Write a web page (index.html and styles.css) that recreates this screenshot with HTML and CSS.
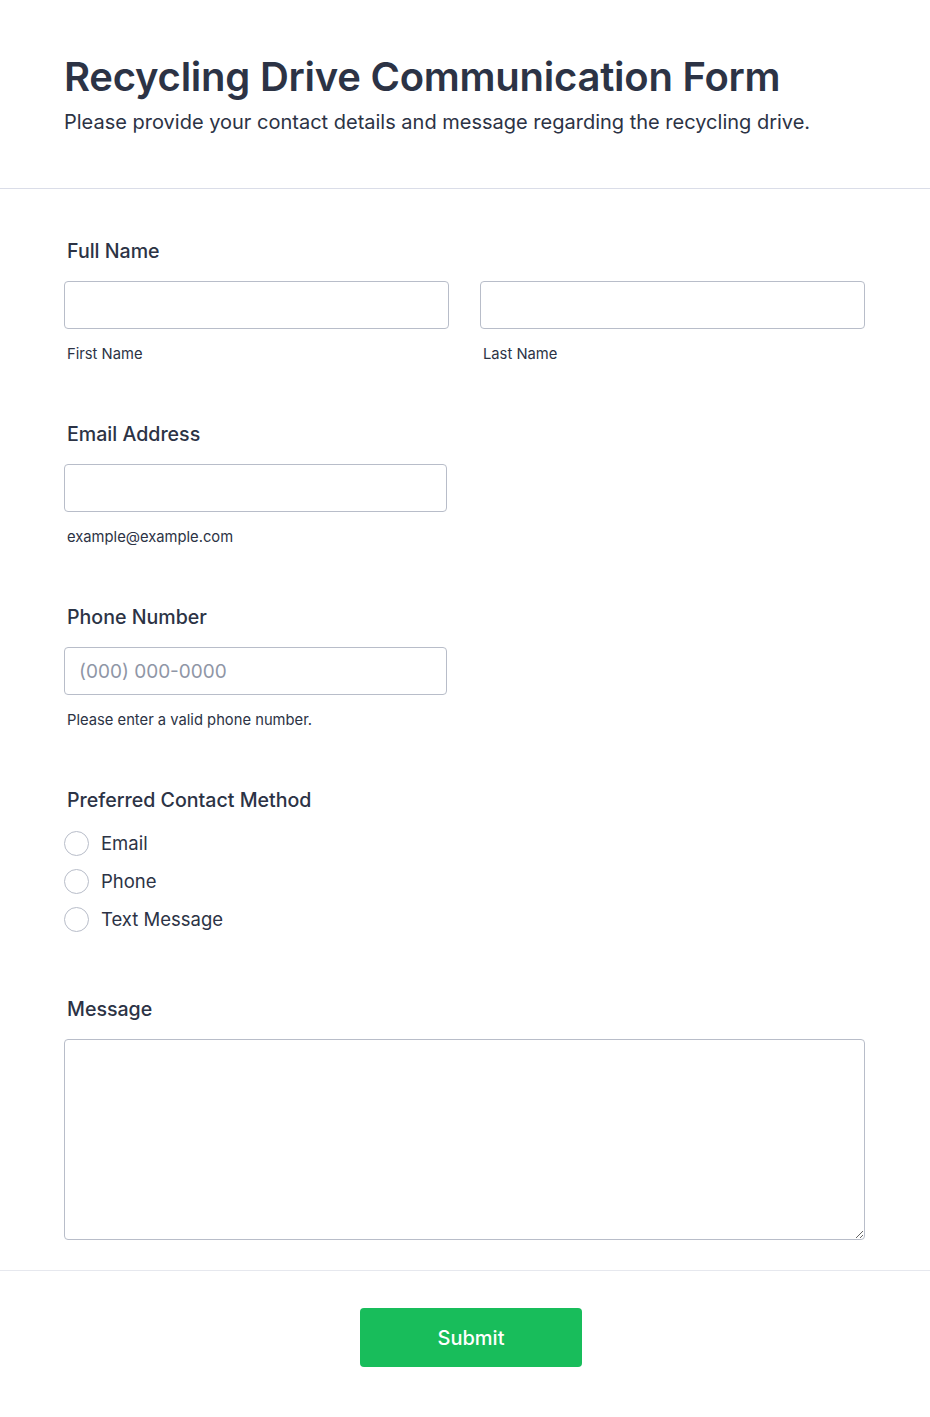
FILE: index.html
```html
<!DOCTYPE html>
<html lang="en">
<head>
<meta charset="utf-8">
<title>Recycling Drive Communication Form</title>
<link rel="stylesheet" href="styles.css">
</head>
<body>
<header class="form-header">
  <h1 class="form-title">Recycling Drive Communication Form</h1>
  <p class="form-subtitle">Please provide your contact details and message regarding the recycling drive.</p>
</header>
<form class="form-body">
  <div class="field">
    <label class="field-label">Full Name</label>
    <div class="name-grid">
      <div class="sub">
        <input class="text-input" type="text">
        <span class="sub-label">First Name</span>
      </div>
      <div class="sub">
        <input class="text-input" type="text">
        <span class="sub-label">Last Name</span>
      </div>
    </div>
  </div>
  <div class="field">
    <label class="field-label">Email Address</label>
    <div class="sub narrow">
      <input class="text-input" type="email">
      <span class="sub-label">example@example.com</span>
    </div>
  </div>
  <div class="field">
    <label class="field-label">Phone Number</label>
    <div class="sub narrow">
      <input class="text-input" type="tel" placeholder="(000) 000-0000">
      <span class="sub-label">Please enter a valid phone number.</span>
    </div>
  </div>
  <div class="field">
    <label class="field-label">Preferred Contact Method</label>
    <div class="radio-list">
      <label class="radio-row"><span class="radio"></span><span class="radio-text">Email</span></label>
      <label class="radio-row"><span class="radio"></span><span class="radio-text">Phone</span></label>
      <label class="radio-row"><span class="radio"></span><span class="radio-text">Text Message</span></label>
    </div>
  </div>
  <div class="field last">
    <label class="field-label">Message</label>
    <textarea class="textarea"></textarea>
  </div>
</form>
<footer class="form-footer">
  <button class="submit" type="button">Submit</button>
</footer>
</body>
</html>
```

FILE: styles.css
```css
* { box-sizing: border-box; }
html, body { margin: 0; padding: 0; background: #ffffff; }
body {
  font-family: Inter, "Noto Sans", "Liberation Sans", sans-serif;
  color: #2c3345;
  width: 930px;
}
.form-header {
  padding: 53px 64px 52px 64px;
  border-bottom: 1px solid #dadde8;
}
.form-title {
  margin: 0;
  font-size: 40px;
  line-height: 48px;
  font-weight: 600;
  letter-spacing: -0.25px;
  color: #2c3345;
}
.form-subtitle {
  margin: 7px 0 0 0;
  font-size: 20px;
  line-height: 28px;
  font-weight: 400;
  color: #2c3345;
}
.form-body {
  padding: 50px 65px 0 64px;
  display: flex;
  flex-direction: column;
  gap: 59px;
}
.field { display: flex; flex-direction: column; }
.field-label {
  display: block;
  font-size: 19.6px;
  line-height: 25px;
  font-weight: 500;
  padding-left: 3px;
  margin-bottom: 17px;
}
.name-grid {
  display: grid;
  grid-template-columns: 1fr 1fr;
  column-gap: 31px;
}
.sub { display: flex; flex-direction: column; }
.narrow { width: 383px; }
.text-input {
  height: 48px;
  width: 100%;
  border: 1px solid #b8bdc9;
  border-radius: 4px;
  padding: 0 14px;
  font-family: inherit;
  font-size: 19px;
  color: #2c3345;
  background: #fff;
}
.text-input::placeholder { color: #8f96a6; }
.sub-label {
  margin-top: 15px;
  margin-bottom: -1px;
  font-size: 14.75px;
  line-height: 20px;
  padding-left: 3px;
  color: #2c3345;
}
.radio-list {
  display: flex;
  flex-direction: column;
  margin-top: -6px;
}
.radio-row {
  display: flex;
  align-items: center;
  height: 38px;
}
.radio {
  width: 25px;
  height: 25px;
  border: 1.5px solid #b8bdc9;
  border-radius: 50%;
  background: #fff;
  flex: none;
}
.radio-text {
  margin-left: 12px;
  font-size: 18.5px;
  line-height: 24px;
}
.textarea {
  display: block;
  width: 100%;
  height: 201px;
  border: 1px solid #b8bdc9;
  border-radius: 4px;
  font-family: inherit;
  font-size: 16px;
  padding: 10px 14px;
  resize: vertical;
}
.form-footer {
  margin-top: 30px;
  border-top: 1px solid #e6e8ee;
  padding: 37px 0 50px 0;
  display: flex;
  justify-content: center;
}
.submit {
  margin-left: 12px;
  width: 222px;
  height: 59px;
  background: #18bd5b;
  color: #fff;
  border: none;
  border-radius: 4px;
  font-family: inherit;
  font-size: 20px;
  font-weight: 500;
}
```
